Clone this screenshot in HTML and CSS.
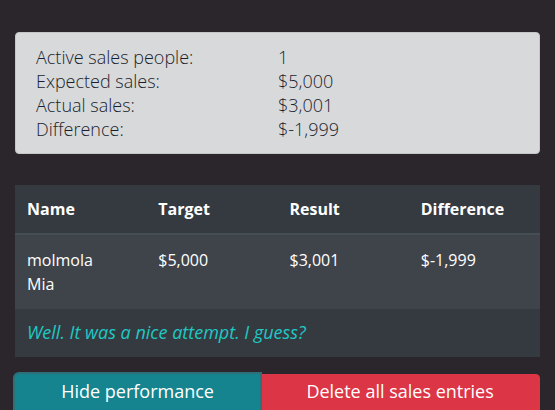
FILE: index.html
```html
<!DOCTYPE html>
<html>
<head>
<meta charset="utf-8">
<link rel="stylesheet" href="styles.css">
</head>
<body>
<div class="page">
  <div class="summary">
    <div class="summary-grid">
      <span>Active sales people:</span><span>1</span>
      <span>Expected sales:</span><span>$5,000</span>
      <span>Actual sales:</span><span>$3,001</span>
      <span>Difference:</span><span>$-1,999</span>
    </div>
  </div>
  <table class="perf">
    <thead>
      <tr><th>Name</th><th>Target</th><th>Result</th><th>Difference</th></tr>
    </thead>
    <tbody>
      <tr class="row"><td>molmola<br>Mia</td><td>$5,000</td><td>$3,001</td><td>$-1,999</td></tr>
      <tr class="msg"><td colspan="4"><em>Well. It was a nice attempt. I guess?</em></td></tr>
    </tbody>
  </table>
  <div class="btn-group">
    <button class="btn btn-info">Hide performance</button>
    <button class="btn btn-danger">Delete all sales entries</button>
  </div>
</div>
</body>
</html>
```
FILE: styles.css
```css
html, body {
  margin: 0;
  padding: 0;
  background: #2b262b;
  height: 100%;
  overflow: hidden;
}
body {
  font-family: "Open Sans", "Noto Sans", sans-serif;
  font-size: 16px;
  line-height: 24px;
}
.page {
  padding: 32px 15px 0 15px;
}
.summary {
  background: #d8d9da;
  border: 1px solid #c4c6c8;
  border-radius: 4px;
  padding: 12px 20px;
  color: #1a1f2e;
  font-size: 18px;
  font-weight: 300;
}
.summary-grid {
  display: grid;
  grid-template-columns: 242px auto;
}
.perf {
  margin-top: 31px;
  width: 100%;
  border-collapse: collapse;
  table-layout: fixed;
  color: #fff;
}
.perf th {
  background: #343a40;
  text-align: left;
  font-weight: 700;
  padding: 12px 12px;
  border-bottom: 2px solid #454d55;
}
.perf td {
  padding: 13px 12px;
  vertical-align: top;
}
.perf .row td {
  background: #3f444b;
}
.perf .msg td {
  background: #343a40;
  padding: 11px 12px 12px;
}
.perf .msg em {
  color: #1fc8c4;
  font-size: 18px;
}
.btn-group {
  display: flex;
  margin-top: 17px;
}
.btn {
  flex: 1 1 auto;
  font-family: inherit;
  font-size: 18px;
  line-height: 27px;
  color: #fff;
  border: 1px solid transparent;
  padding: 3px 12px 8px;
  margin: 0;
}
.btn-info {
  background: #16848f;
  border-color: #16848f;
  border-radius: 4px 0 0 4px;
  box-shadow: 0 0 0 2px #2f6f78;
  position: relative;
  z-index: 1;
}
.btn-danger {
  background: #dc3545;
  border-color: #dc3545;
  border-radius: 0 4px 4px 0;
}
```
